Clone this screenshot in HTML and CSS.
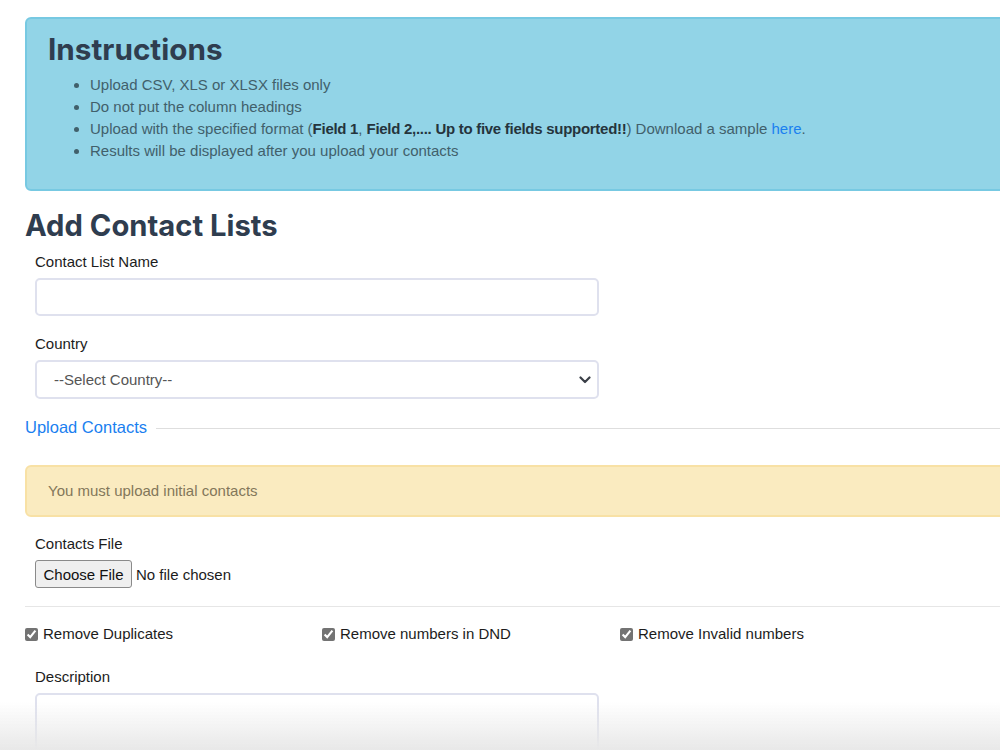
FILE: index.html
```html
<!DOCTYPE html>
<html lang="en">
<head>
    <meta charset="UTF-8">
    <meta name="viewport" content="width=device-width, initial-scale=1.0">
    <title>Add Contact Lists</title>
    <link rel="stylesheet" href="styles.css">
</head>
<body>

    <div class="page">

        <!-- Instructions box -->
        <div class="info-box">
            <h2>Instructions</h2>
            <ul>
                <li>Upload CSV, XLS or XLSX files only</li>
                <li>Do not put the column headings</li>
                <li>Upload with the specified format (<b>Field 1</b>, <b>Field 2,.... Up to five fields supported!!</b>) Download a sample <a href="#">here</a>.</li>
                <li>Results will be displayed after you upload your contacts</li>
            </ul>
        </div>

        <h1>Add Contact Lists</h1>

        <div class="form-group">
            <label for="listName">Contact List Name</label>
            <input type="text" id="listName">
        </div>

        <div class="form-group">
            <label for="country">Country</label>
            <div class="select-wrap">
                <select id="country">
                    <option>--Select Country--</option>
                </select>
                <svg class="chevron" width="12" height="8" viewBox="0 0 12 8">
                    <path d="M1.5 1.5 L6 6 L10.5 1.5" fill="none" stroke="#3a3f47" stroke-width="2.2" stroke-linecap="round" stroke-linejoin="round"/>
                </svg>
            </div>
        </div>

        <div class="section-title">
            <span>Upload Contacts</span>
            <div class="section-line"></div>
        </div>

        <div class="alert">You must upload initial contacts</div>

        <div class="form-group">
            <label>Contacts File</label>
            <div class="file-row">
                <button class="file-btn">Choose File</button>
                <span>No file chosen</span>
            </div>
        </div>

        <hr>

        <div class="options">
            <label class="check"><input type="checkbox" checked> Remove Duplicates</label>
            <label class="check"><input type="checkbox" checked> Remove numbers in DND</label>
            <label class="check"><input type="checkbox" checked> Remove Invalid numbers</label>
        </div>

        <div class="form-group">
            <label for="description">Description</label>
            <textarea id="description"></textarea>
        </div>

    </div>

    <div class="fade"></div>

</body>
</html>
```

FILE: styles.css
```css
body {
    font-family: "Liberation Sans", Arial, sans-serif;
    background-color: white;
    color: #1c1c1c;
    margin: 0;
    padding: 17px 0 0 25px;
    overflow: hidden;
}

.page {
    width: 1100px;
}

.info-box {
    background-color: #92d4e7;
    border: 2px solid #77c9e2;
    border-radius: 6px;
    padding: 12px 21px 27px;
}

.info-box h2 {
    font-family: Inter, "Open Sans", sans-serif;
    font-weight: 700;
    font-size: 29.7px;
    line-height: 36px;
    color: #2f3d4f;
    margin: 0 0 7px;
}

.info-box ul {
    margin: 0;
    padding-left: 42px;
    font-size: 15px;
    line-height: 22px;
    color: #41606b;
}

.info-box b {
    color: #25343d;
    letter-spacing: -0.28px;
}

.info-box a {
    color: #1a80f0;
    text-decoration: none;
}

h1 {
    font-family: Inter, "Open Sans", sans-serif;
    font-weight: 700;
    font-size: 29.2px;
    line-height: 36px;
    color: #2f3d4f;
    margin: 17px 0 8px;
}

.form-group {
    padding: 0 10px;
    margin-bottom: 18px;
}

.form-group label {
    display: block;
    font-size: 15px;
    line-height: 20px;
    margin-bottom: 6px;
}

input[type="text"],
select,
textarea {
    display: block;
    box-sizing: border-box;
    width: 564px;
    border: 2px solid #dfe1ee;
    border-radius: 5px;
    background-color: white;
    font-family: "Liberation Sans", Arial, sans-serif;
}

input[type="text"] {
    height: 38px;
}

.select-wrap {
    position: relative;
    width: 564px;
}

select {
    height: 39px;
    padding-left: 17px;
    font-size: 15px;
    color: #555;
    appearance: none;
    -webkit-appearance: none;
}

.chevron {
    position: absolute;
    right: 8px;
    top: 16px;
}

.section-title {
    display: flex;
    align-items: center;
    gap: 9px;
    margin-top: 18px;
}

.section-title span {
    font-size: 16.5px;
    line-height: 20px;
    color: #1a80f0;
}

.section-line {
    flex: 1;
    height: 1px;
    background-color: #dedede;
    margin-top: 2px;
}

.alert {
    margin-top: 28px;
    margin-bottom: 17px;
    height: 48px;
    line-height: 48px;
    padding-left: 21px;
    background-color: #faebc0;
    border: 2px solid #f8e1a5;
    border-radius: 6px;
    font-size: 15px;
    color: #83775a;
}

.file-row {
    display: flex;
    align-items: center;
    gap: 4px;
    font-size: 15px;
}

.file-btn {
    height: 28px;
    width: 97px;
    padding: 0;
    font-family: "Liberation Sans", Arial, sans-serif;
    font-size: 15px;
    color: #111;
    background-color: #efefef;
    border: 1px solid #8a8a8a;
    border-radius: 3px;
}

hr {
    border: none;
    height: 1px;
    background-color: #e6e6e6;
    margin: 17px 0 17px;
}

.options {
    display: grid;
    grid-template-columns: 297px 298px 300px;
    margin-bottom: 23px;
}

.check {
    display: flex;
    align-items: center;
    gap: 5px;
    font-size: 15px;
    line-height: 20px;
}

.check input {
    margin: 0;
    width: 13px;
    height: 13px;
    accent-color: #737373;
}

textarea {
    height: 80px;
    resize: none;
}

.fade {
    position: fixed;
    left: 0;
    right: 0;
    bottom: 0;
    height: 48px;
    background: linear-gradient(to bottom, rgba(232, 232, 232, 0), rgba(232, 232, 232, 1));
    pointer-events: none;
}
```
